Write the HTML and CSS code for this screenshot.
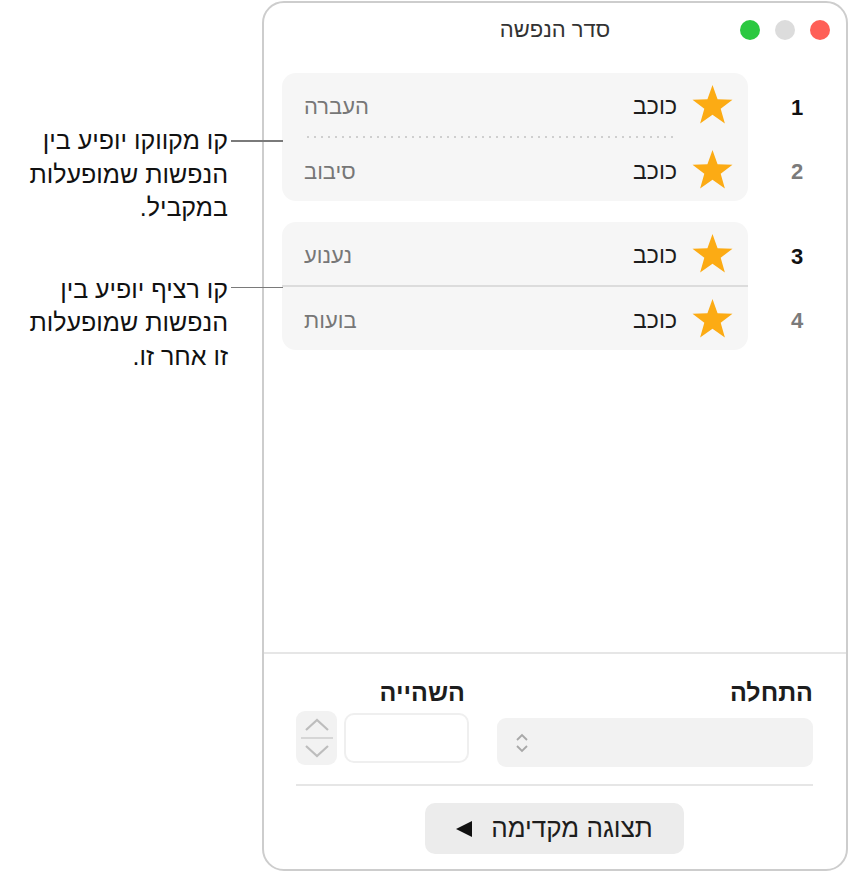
FILE: index.html
```html
<!DOCTYPE html>
<html lang="he">
<head>
    <meta charset="UTF-8">
    <meta name="viewport" content="width=device-width, initial-scale=1.0">
    <title>סדר הנפשה</title>
    <link rel="stylesheet" href="styles.css">
</head>
<body>
    <div class="page">
        <!-- הערות הסבר משמאל לחלון -->
        <div class="notes">
            <div class="note note-dotted">
                <p class="note-text">קו מקווקו יופיע בין<br>הנפשות שמופעלות<br>במקביל.</p>
                <span class="leader"></span>
            </div>
            <div class="note note-solid">
                <p class="note-text">קו רציף יופיע בין<br>הנפשות שמופעלות<br>זו אחר זו.</p>
                <span class="leader"></span>
            </div>
        </div>

        <div class="panel">
            <div class="titlebar">
                <div class="lights">
                    <span class="light red"></span>
                    <span class="light idle"></span>
                    <span class="light green"></span>
                </div>
                <div class="title">סדר הנפשה</div>
            </div>

            <div class="order-list">
                <div class="group">
                    <div class="numbers">
                        <span class="num">1</span>
                        <span class="num dim">2</span>
                    </div>
                    <div class="group-box">
                        <div class="row">
                            <svg class="star" viewBox="0 0 42 40"><polygon points="21,0 26.2,14.6 41.5,15 29.4,24.4 33.7,39.5 21,30.6 8.3,39.5 12.6,24.4 0.5,15 15.8,14.6"/></svg>
                            <span class="obj">כוכב</span>
                            <span class="effect">העברה</span>
                        </div>
                        <div class="sep-dotted"></div>
                        <div class="row">
                            <svg class="star" viewBox="0 0 42 40"><polygon points="21,0 26.2,14.6 41.5,15 29.4,24.4 33.7,39.5 21,30.6 8.3,39.5 12.6,24.4 0.5,15 15.8,14.6"/></svg>
                            <span class="obj">כוכב</span>
                            <span class="effect">סיבוב</span>
                        </div>
                    </div>
                </div>

                <div class="group">
                    <div class="numbers">
                        <span class="num">3</span>
                        <span class="num dim">4</span>
                    </div>
                    <div class="group-box">
                        <div class="row">
                            <svg class="star" viewBox="0 0 42 40"><polygon points="21,0 26.2,14.6 41.5,15 29.4,24.4 33.7,39.5 21,30.6 8.3,39.5 12.6,24.4 0.5,15 15.8,14.6"/></svg>
                            <span class="obj">כוכב</span>
                            <span class="effect">נענוע</span>
                        </div>
                        <div class="sep-solid"></div>
                        <div class="row">
                            <svg class="star" viewBox="0 0 42 40"><polygon points="21,0 26.2,14.6 41.5,15 29.4,24.4 33.7,39.5 21,30.6 8.3,39.5 12.6,24.4 0.5,15 15.8,14.6"/></svg>
                            <span class="obj">כוכב</span>
                            <span class="effect">בועות</span>
                        </div>
                    </div>
                </div>
            </div>

            <div class="settings">
                <div class="fields">
                    <div class="field field-start">
                        <div class="label">התחלה</div>
                        <div class="popup">
                            <svg class="updown" viewBox="0 0 14 24"><path d="M2 9 L7 4 L12 9 M2 15 L7 20 L12 15"/></svg>
                        </div>
                    </div>
                    <div class="field field-delay">
                        <div class="label">השהייה</div>
                        <div class="delay-row">
                            <div class="textbox"></div>
                            <div class="stepper">
                                <svg class="step" viewBox="0 0 26 14"><path d="M2 12 L13 2 L24 12"/></svg>
                                <span class="step-line"></span>
                                <svg class="step" viewBox="0 0 26 14"><path d="M2 2 L13 12 L24 2"/></svg>
                            </div>
                        </div>
                    </div>
                </div>
                <div class="rule"></div>
                <div class="actions">
                    <button class="preview-btn">
                        <span>תצוגה מקדימה</span>
                        <svg class="play" viewBox="0 0 16 16"><polygon points="0,8 16,0 16,16"/></svg>
                    </button>
                </div>
            </div>
        </div>
    </div>
</body>
</html>
```

FILE: styles.css
```css
html, body {
    margin: 0;
    padding: 0;
    background: #fff;
}
body {
    font-family: "Liberation Sans", Arial, sans-serif;
    color: #1d1d1d;
}
.page {
    display: flex;
    width: 851px;
    height: 878px;
}

/* הערות */
.notes {
    width: 262px;
    flex-shrink: 0;
    padding-top: 124px;
    box-sizing: border-box;
    display: flex;
    flex-direction: column;
    gap: 48px;
    position: relative;
    z-index: 1;
}
.note {
    display: flex;
    align-items: flex-start;
}
.note-text {
    margin: 0;
    flex: 1;
    direction: rtl;
    text-align: right;
    padding-right: 3px;
    font-size: 25px;
    line-height: 33.5px;
    color: #111;
}
.leader {
    width: 52px;
    height: 1.5px;
    margin-top: 16px;
    margin-right: -21px;
    background: #7a7a7a;
    flex-shrink: 0;
}
.note-solid .leader {
    margin-top: 14px;
}

/* חלון */
.panel {
    direction: rtl;
    width: 586px;
    height: 870px;
    margin-top: 1px;
    box-sizing: border-box;
    border: 2px solid #cdcdcd;
    border-radius: 22px;
    background: #fff;
    display: flex;
    flex-direction: column;
}
.titlebar {
    height: 54px;
    display: grid;
    grid-template-columns: 1fr auto 1fr;
    align-items: center;
}
.lights {
    display: flex;
    gap: 15px;
    padding-right: 16px;
}
.light {
    width: 20px;
    height: 20px;
    border-radius: 50%;
}
.light.red { background: #fe5f57; }
.light.idle { background: #dcdcdc; }
.light.green { background: #2bc840; }
.title {
    font-size: 22px;
    color: #333;
}

.order-list {
    flex: 1;
    padding: 16px 0 0 18px;
    display: flex;
    flex-direction: column;
    gap: 21px;
}
.group {
    display: flex;
}
.numbers {
    width: 98px;
    display: flex;
    flex-direction: column;
}
.num {
    height: 64px;
    padding-top: 5px;
    box-sizing: border-box;
    display: flex;
    align-items: center;
    justify-content: center;
    font-size: 22px;
    font-weight: bold;
    color: #111;
}
.num.dim {
    color: #7b7b7b;
}
.group-box {
    flex: 1;
    background: #f6f6f6;
    border-radius: 14px;
    display: flex;
    flex-direction: column;
}
.row {
    height: 63px;
    display: flex;
    align-items: center;
    padding: 0 15px 0 22px;
}
.star {
    width: 41px;
    height: 39px;
    fill: #fcab14;
    flex-shrink: 0;
}
.obj {
    margin-right: 15px;
    padding-top: 4px;
    font-size: 23px;
    color: #1d1d1d;
}
.effect {
    margin-right: auto;
    padding-top: 4px;
    font-size: 22px;
    color: #777;
}
.sep-dotted {
    height: 2px;
    margin: 0 70px 0 20px;
    background-image: linear-gradient(to left, #cfcfcf 2px, transparent 2px);
    background-size: 7px 2px;
}
.sep-solid {
    height: 2px;
    background: #dcdcdc;
}

/* הגדרות תחתונות */
.settings {
    border-top: 2px solid #e6e6e6;
    padding: 25px 33px 15px 32px;
}
.fields {
    display: flex;
    gap: 28px;
    height: 88px;
}
.field-start {
    width: 316px;
}
.field-delay {
    width: 173px;
}
.label {
    height: 26px;
    line-height: 26px;
    font-size: 25px;
    font-weight: bold;
    color: #1d1d1d;
}
.field-delay .label {
    padding-right: 4px;
}
.popup {
    margin-top: 13px;
    height: 49px;
    background: #f2f2f2;
    border-radius: 9px;
    display: flex;
    align-items: center;
    justify-content: flex-end;
    padding-left: 18px;
}
.updown {
    width: 14px;
    height: 24px;
    fill: none;
    stroke: #a8a8a8;
    stroke-width: 1.8;
}
.delay-row {
    margin-top: 6px;
    display: flex;
    align-items: center;
    gap: 7px;
}
.textbox {
    width: 125px;
    height: 50px;
    box-sizing: border-box;
    border: 2px solid #efefef;
    border-radius: 10px;
    background: #fff;
}
.stepper {
    width: 41px;
    height: 54px;
    background: #f2f2f2;
    border-radius: 9px;
    display: flex;
    flex-direction: column;
    align-items: center;
    justify-content: center;
}
.step {
    width: 26px;
    height: 14px;
    fill: none;
    stroke: #bdbdbd;
    stroke-width: 2.2;
}
.step-line {
    width: 32px;
    height: 2px;
    margin: 5px 0;
    background: #d6d6d6;
}
.rule {
    margin-top: 17px;
    height: 2px;
    background: #e6e6e6;
}
.actions {
    margin-top: 17px;
    display: flex;
    justify-content: center;
}
.preview-btn {
    width: 259px;
    height: 51px;
    border: none;
    border-radius: 10px;
    background: #ececec;
    font-family: inherit;
    font-size: 26px;
    color: #1d1d1d;
    display: flex;
    align-items: center;
    justify-content: center;
    gap: 19px;
    padding: 0;
}
.play {
    width: 16px;
    height: 16px;
    fill: #111;
}
```
